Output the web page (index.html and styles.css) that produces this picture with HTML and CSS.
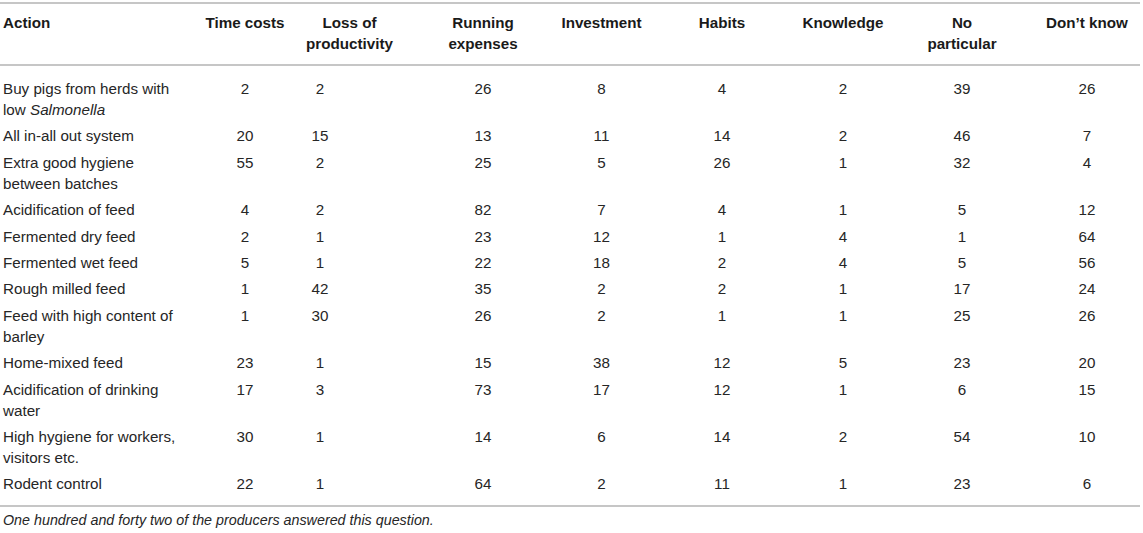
FILE: index.html
```html
<!DOCTYPE html>
<html lang="en">
<head>
    <meta charset="UTF-8">
    <title>Barriers to Salmonella control actions</title>
    <link rel="stylesheet" href="styles.css">
</head>
<body>
    <table class="data-table">
        <colgroup>
            <col class="c-action">
            <col class="c-time">
            <col class="c-loss">
            <col class="c-running">
            <col class="c-invest">
            <col class="c-habits">
            <col class="c-know">
            <col class="c-noparticular">
            <col class="c-dontknow">
        </colgroup>
        <thead>
            <tr>
                <th>Action</th>
                <th>Time costs</th>
                <th>Loss of<br>productivity</th>
                <th>Running<br>expenses</th>
                <th>Investment</th>
                <th>Habits</th>
                <th>Knowledge</th>
                <th>No<br>particular</th>
                <th>Don’t know</th>
            </tr>
        </thead>
        <tbody>
            <tr class="first"><td>Buy pigs from herds with low <i>Salmonella</i></td><td>2</td><td>2</td><td>26</td><td>8</td><td>4</td><td>2</td><td>39</td><td>26</td></tr>
            <tr><td>All in-all out system</td><td>20</td><td>15</td><td>13</td><td>11</td><td>14</td><td>2</td><td>46</td><td>7</td></tr>
            <tr><td>Extra good hygiene between batches</td><td>55</td><td>2</td><td>25</td><td>5</td><td>26</td><td>1</td><td>32</td><td>4</td></tr>
            <tr><td>Acidification of feed</td><td>4</td><td>2</td><td>82</td><td>7</td><td>4</td><td>1</td><td>5</td><td>12</td></tr>
            <tr><td>Fermented dry feed</td><td>2</td><td>1</td><td>23</td><td>12</td><td>1</td><td>4</td><td>1</td><td>64</td></tr>
            <tr><td>Fermented wet feed</td><td>5</td><td>1</td><td>22</td><td>18</td><td>2</td><td>4</td><td>5</td><td>56</td></tr>
            <tr><td>Rough milled feed</td><td>1</td><td>42</td><td>35</td><td>2</td><td>2</td><td>1</td><td>17</td><td>24</td></tr>
            <tr><td>Feed with high content of barley</td><td>1</td><td>30</td><td>26</td><td>2</td><td>1</td><td>1</td><td>25</td><td>26</td></tr>
            <tr><td>Home-mixed feed</td><td>23</td><td>1</td><td>15</td><td>38</td><td>12</td><td>5</td><td>23</td><td>20</td></tr>
            <tr><td>Acidification of drinking water</td><td>17</td><td>3</td><td>73</td><td>17</td><td>12</td><td>1</td><td>6</td><td>15</td></tr>
            <tr><td>High hygiene for workers, visitors etc.</td><td>30</td><td>1</td><td>14</td><td>6</td><td>14</td><td>2</td><td>54</td><td>10</td></tr>
            <tr class="last"><td>Rodent control</td><td>22</td><td>1</td><td>64</td><td>2</td><td>11</td><td>1</td><td>23</td><td>6</td></tr>
        </tbody>
    </table>
    <p class="footnote">One hundred and forty two of the producers answered this question.</p>
</body>
</html>
```

FILE: styles.css
```css
body {
    margin: 0;
    background: #ffffff;
    color: #262626;
    font-family: "Liberation Sans", Arial, Helvetica, sans-serif;
}
.data-table {
    width: 1140px;
    margin-top: 2px;
    table-layout: fixed;
    border-collapse: collapse;
    font-size: 15.2px;
    line-height: 21px;
}
.c-action { width: 195px; }
.c-time { width: 95px; }
.c-loss { width: 119px; }
.c-running { width: 133px; }
.c-invest { width: 119px; }
.c-habits { width: 122px; }
.c-know { width: 120px; }
.c-noparticular { width: 122px; }
.c-dontknow { width: 115px; }

.data-table th,
.data-table td {
    padding: 2.5px 0 2.9px;
    text-align: center;
    vertical-align: top;
}
.data-table th {
    font-weight: bold;
    color: #1a1a1a;
    padding-top: 8px;
    padding-bottom: 10px;
    border-top: 2px solid #c6c6c6;
    border-bottom: 2px solid #c6c6c6;
}
.data-table th:first-child,
.data-table td:first-child {
    text-align: left;
    padding-left: 3px;
    padding-right: 12px;
}
/* nudge number columns to sit under the printed headers */
.data-table th:nth-child(2),
.data-table td:nth-child(2) { padding-left: 5px; }
.data-table td:nth-child(3) { padding-right: 59px; }
.data-table th:nth-child(4),
.data-table td:nth-child(4) { padding-left: 15px; }
.data-table th:nth-child(8),
.data-table td:nth-child(8) { padding-right: 4px; }
.data-table th:nth-child(9),
.data-table td:nth-child(9) { padding-left: 9px; }

.data-table tr.first td { padding-top: 12px; }
.data-table tr.last td {
    padding-bottom: 10.5px;
    border-bottom: 2px solid #c6c6c6;
}
.footnote {
    margin: 3px 0 0;
    padding-left: 3px;
    font-size: 14.3px;
    line-height: 21px;
    font-style: italic;
}
```
